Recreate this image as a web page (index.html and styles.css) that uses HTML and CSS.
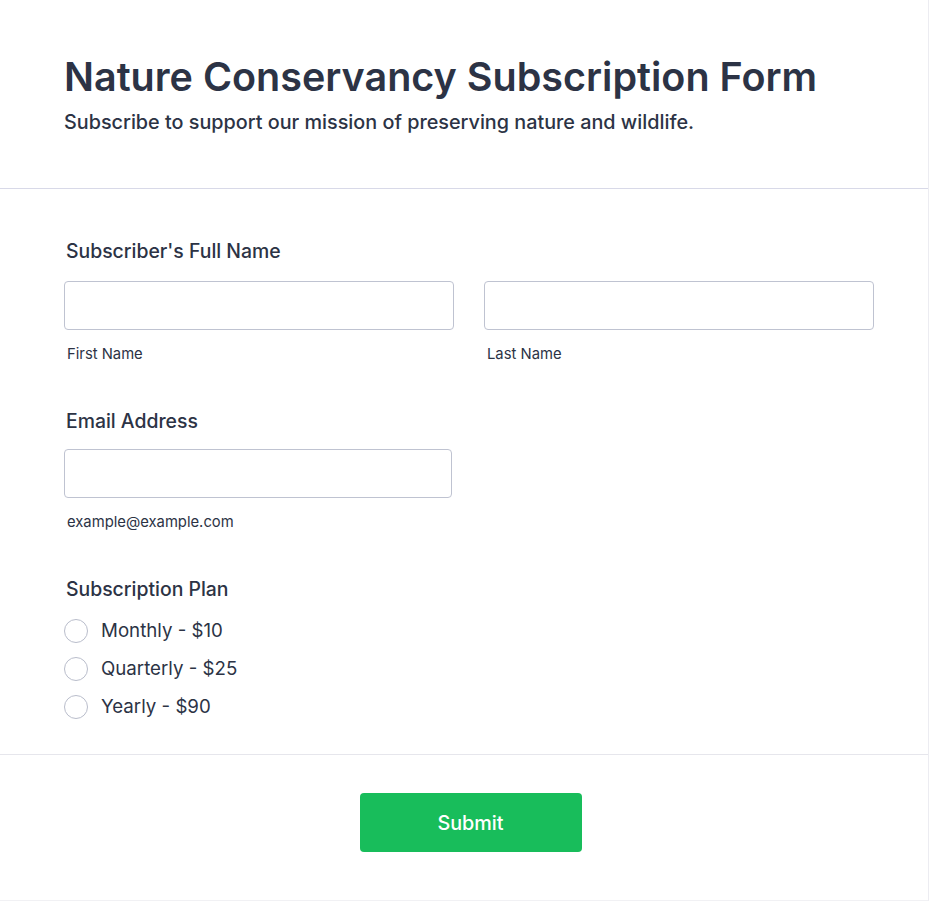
FILE: index.html
```html
<!DOCTYPE html>
<html lang="en">
<head>
<meta charset="utf-8">
<title>Nature Conservancy Subscription Form</title>
<link rel="stylesheet" href="styles.css">
</head>
<body>
<div class="card">
  <header class="header">
    <h1 class="title">Nature Conservancy Subscription Form</h1>
    <p class="subtitle">Subscribe to support our mission of preserving nature and wildlife.</p>
  </header>
  <form class="form">
    <div class="field">
      <div class="label">Subscriber's Full Name</div>
      <div class="name-grid">
        <div class="sub-field">
          <input class="input" type="text">
          <div class="sublabel">First Name</div>
        </div>
        <div class="sub-field">
          <input class="input" type="text">
          <div class="sublabel">Last Name</div>
        </div>
      </div>
    </div>
    <div class="field">
      <div class="label tight">Email Address</div>
      <div class="sub-field email">
        <input class="input" type="email">
        <div class="sublabel">example@example.com</div>
      </div>
    </div>
    <div class="field last">
      <div class="label">Subscription Plan</div>
      <div class="radios">
        <label class="radio"><span class="circle"></span><span class="radio-text">Monthly - $10</span></label>
        <label class="radio"><span class="circle"></span><span class="radio-text">Quarterly - $25</span></label>
        <label class="radio"><span class="circle"></span><span class="radio-text">Yearly - $90</span></label>
      </div>
    </div>
  </form>
  <div class="footer">
    <button class="submit" type="button">Submit</button>
  </div>
</div>
</body>
</html>
```

FILE: styles.css
```css
* { box-sizing: border-box; }
html, body { margin: 0; padding: 0; background: #ffffff; }
body {
  font-family: Inter, "Noto Sans", sans-serif;
  color: #2c3345;
}
.card {
  width: 929px;
  min-height: 901px;
  border-right: 1px solid #ececf1;
  border-bottom: 1px solid #f1f1f4;
  background: #fff;
}
.header {
  padding: 55px 54px 54px 64px;
  border-bottom: 1px solid #d8d9e8;
}
.title {
  margin: 0;
  font-size: 39.5px;
  line-height: 44px;
  font-weight: 600;
  color: #2c3345;
}
.subtitle {
  margin: 11px 0 0;
  font-size: 19.8px;
  line-height: 24px;
  font-weight: 500;
  color: #2c3345;
}
.form {
  padding: 50px 54px 0 64px;
}
.field {
  padding-bottom: 46px;
}
.field.last { padding-bottom: 35px; }
.label {
  font-size: 19.4px;
  line-height: 24px;
  font-weight: 500;
  padding-left: 2px;
  margin-bottom: 18px;
}
.label.tight { margin-bottom: 16px; }
.name-grid {
  display: grid;
  grid-template-columns: 1fr 1fr;
  column-gap: 30px;
}
.email { width: 388px; }
.input {
  display: block;
  width: 100%;
  height: 49px;
  border: 1px solid #bfc3d1;
  border-radius: 4px;
  background: #fff;
  margin: 0;
  padding: 0 12px;
  font: inherit;
}
.sublabel {
  margin-top: 15px;
  padding-left: 3px;
  font-size: 14.8px;
  line-height: 18px;
  color: #2c3345;
}
.radios {
  display: flex;
  flex-direction: column;
  gap: 14px;
}
.radio {
  display: flex;
  align-items: center;
  gap: 13px;
  height: 24px;
}
.circle {
  width: 24px;
  height: 24px;
  border: 1px solid #b9bdcb;
  border-radius: 50%;
  background: #fff;
  flex: none;
}
.radio-text {
  font-size: 18.7px;
  line-height: 24px;
  color: #2c3345;
}
.footer {
  border-top: 1px solid #e6e6ec;
  padding: 38px 54px 48px 67px;
  display: flex;
  justify-content: center;
}
.submit {
  width: 222px;
  height: 59px;
  background: #18bd5b;
  border: none;
  border-radius: 4px;
  color: #fff;
  font-family: Inter, "Noto Sans", sans-serif;
  font-size: 19.8px;
  font-weight: 500;
  cursor: pointer;
}
```
